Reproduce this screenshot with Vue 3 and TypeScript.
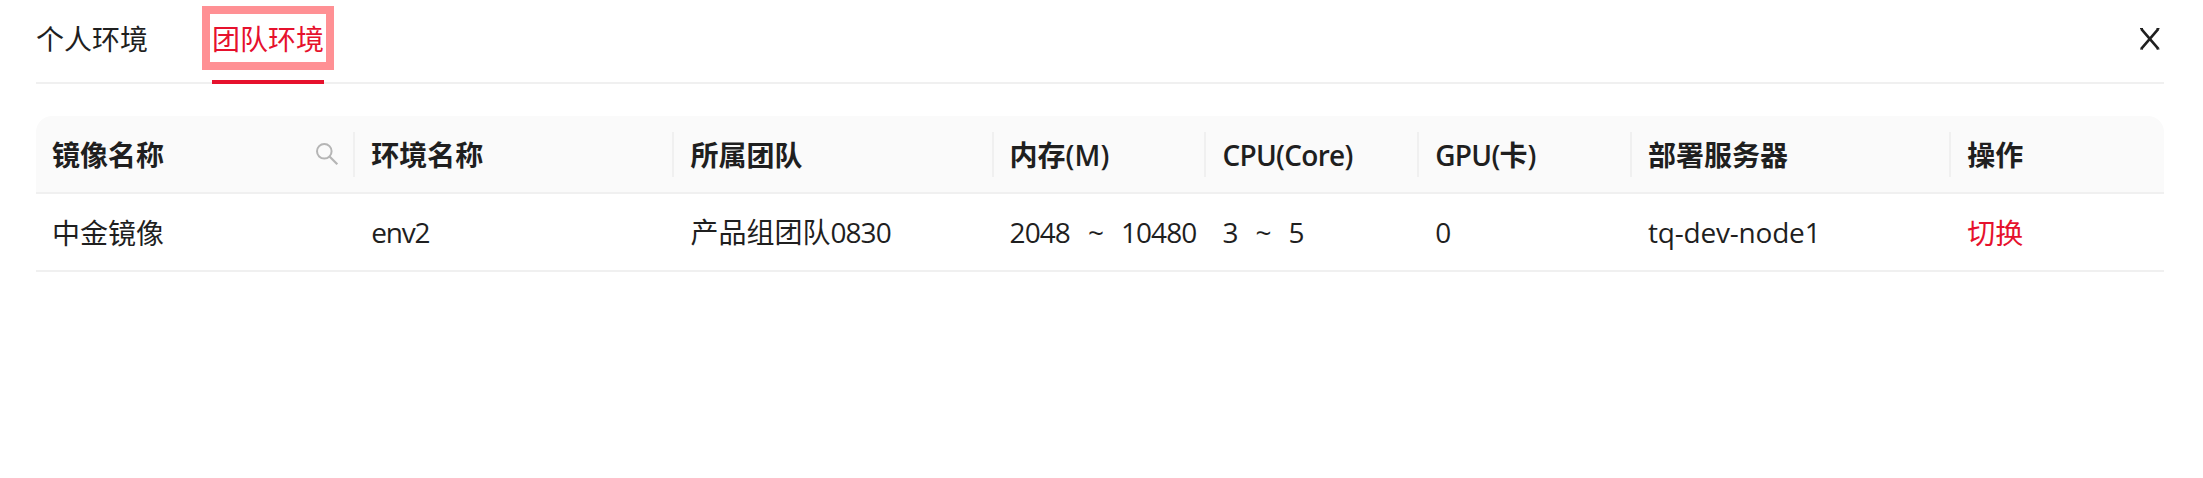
<script setup lang="ts">
import { ref } from 'vue'

interface Segment {
  text: string
  kind: string
}

interface Column {
  key: string
  title: Segment[]
  searchable?: boolean
}

const tabs = ['个人环境', '团队环境']
const activeTab = ref(1)

const columns: Column[] = [
  { key: 'image', title: [{ text: '镜像名称', kind: 'han' }], searchable: true },
  { key: 'env', title: [{ text: '环境名称', kind: 'han' }] },
  { key: 'team', title: [{ text: '所属团队', kind: 'han' }] },
  { key: 'memory', title: [{ text: '内存', kind: 'han' }, { text: '(M)', kind: 'latin unit' }] },
  { key: 'cpu', title: [{ text: 'CPU(Core)', kind: 'latin' }] },
  { key: 'gpu', title: [{ text: 'GPU(', kind: 'latin' }, { text: '卡', kind: 'han' }, { text: ')', kind: 'latin' }] },
  { key: 'server', title: [{ text: '部署服务器', kind: 'han' }] },
  { key: 'action', title: [{ text: '操作', kind: 'han' }] },
]

const cells: Segment[][] = [
  [{ text: '中金镜像', kind: 'han' }],
  [{ text: 'env2', kind: 'latin env' }],
  [{ text: '产品组团队', kind: 'han' }, { text: '0830', kind: 'latin' }],
  [{ text: '2048', kind: 'latin' }, { text: '~', kind: 'latin tilde' }, { text: '10480', kind: 'latin' }],
  [{ text: '3', kind: 'latin' }, { text: '~', kind: 'latin tilde' }, { text: '5', kind: 'latin' }],
  [{ text: '0', kind: 'latin' }],
  [{ text: 'tq-dev-node1', kind: 'latin host' }],
  [{ text: '切换', kind: 'link' }],
]
</script>

<template>
  <main class="panel">
    <header class="tabs">
      <nav class="tab-list">
        <button
          v-for="(tab, i) in tabs"
          :key="tab"
          class="tab"
          :class="{ active: i === activeTab }"
          @click="activeTab = i"
        >
          {{ tab }}
          <i v-if="i === 1" class="highlight"></i>
        </button>
      </nav>
      <button class="close" aria-label="close">
        <svg width="22" height="24" viewBox="0 0 22 24" fill="none" stroke="#1f1f1f">
          <path d="M2.2 1.8 19.4 21.8M19.4 1.8 2.2 21.8" stroke-width="2.6" />
          <path d="M1 1.5H4M17.5 1.5H20.5M1 22H4M17.5 22H20.5" stroke-width="1" />
        </svg>
      </button>
    </header>

    <section class="table">
      <div class="row head">
        <div v-for="col in columns" :key="col.key" class="cell">
          <span class="text"><span v-for="(s, i) in col.title" :key="i" :class="s.kind">{{ s.text }}</span></span>
          <svg v-if="col.searchable" class="search" width="24" height="24" viewBox="0 0 24 24" fill="none" stroke="#b5b5b5" stroke-width="2">
            <circle cx="9.3" cy="9.3" r="7.3" />
            <path d="M14.5 14.5 22.3 22.3" stroke-width="2.2" />
          </svg>
        </div>
      </div>
      <div class="row body">
        <div v-for="(cell, c) in cells" :key="c" class="cell">
          <span class="text"><span v-for="(s, i) in cell" :key="i" :class="s.kind">{{ s.text }}</span></span>
        </div>
      </div>
    </section>
  </main>
</template>

<style>
body {
  background: #fff;
}
</style>

<style scoped>
.panel {
  box-sizing: border-box;
  height: 478px;
  padding: 0 39px 0 36px;
  color: #1f1f1f;
  font: 28px/44px 'Noto Sans CJK SC', sans-serif;
}
button {
  padding: 0;
  border: 0;
  background: none;
  color: inherit;
  font: inherit;
  cursor: pointer;
}
.tabs {
  display: flex;
  justify-content: space-between;
  box-sizing: border-box;
  height: 84px;
  border-bottom: 2px solid #f0f0f0;
}
.tab-list {
  display: flex;
  gap: 64px;
}
.tab {
  position: relative;
  box-sizing: border-box;
  height: 84px;
  padding-bottom: 4px;
  border-bottom: 4px solid transparent;
}
.tab.active {
  color: #e6112d;
  border-bottom-color: #e6112d;
}
.highlight {
  position: absolute;
  top: 6px;
  left: -10px;
  box-sizing: border-box;
  width: 132px;
  height: 64px;
  border: 8px solid #ff9094;
}
.close {
  display: flex;
  height: 24px;
  margin: 27px 3px 0 0;
}
.table {
  margin-top: 32px;
}
.row {
  display: grid;
  grid-template-columns: 15fr 15fr 15fr 10fr 10fr 10fr 15fr 10fr;
  box-sizing: border-box;
  height: 78px;
  border-bottom: 2px solid #f0f0f0;
}
.head {
  background: #fafafa;
  border-radius: 16px 16px 0 0;
  font-weight: 700;
}
.body {
  padding-bottom: 1px;
}
.cell {
  display: flex;
  align-items: center;
  justify-content: space-between;
  min-width: 0;
  padding: 0 16px;
  white-space: nowrap;
}
.head .cell:not(:last-child) {
  background: linear-gradient(#f0f0f0, #f0f0f0) right 0 center / 2px 45px no-repeat;
}
.latin {
  font-family: 'Open Sans', 'Noto Sans', sans-serif;
  letter-spacing: -0.93px;
}
.head .latin {
  font-weight: 550;
  letter-spacing: -0.7px;
}
.head .unit {
  letter-spacing: 0.1px;
}
.env {
  letter-spacing: -1.2px;
}
.host {
  letter-spacing: -0.2px;
}
.tilde {
  display: inline-block;
  width: 51px;
  text-align: center;
}
.link {
  color: #e6112d;
  cursor: pointer;
}
</style>
